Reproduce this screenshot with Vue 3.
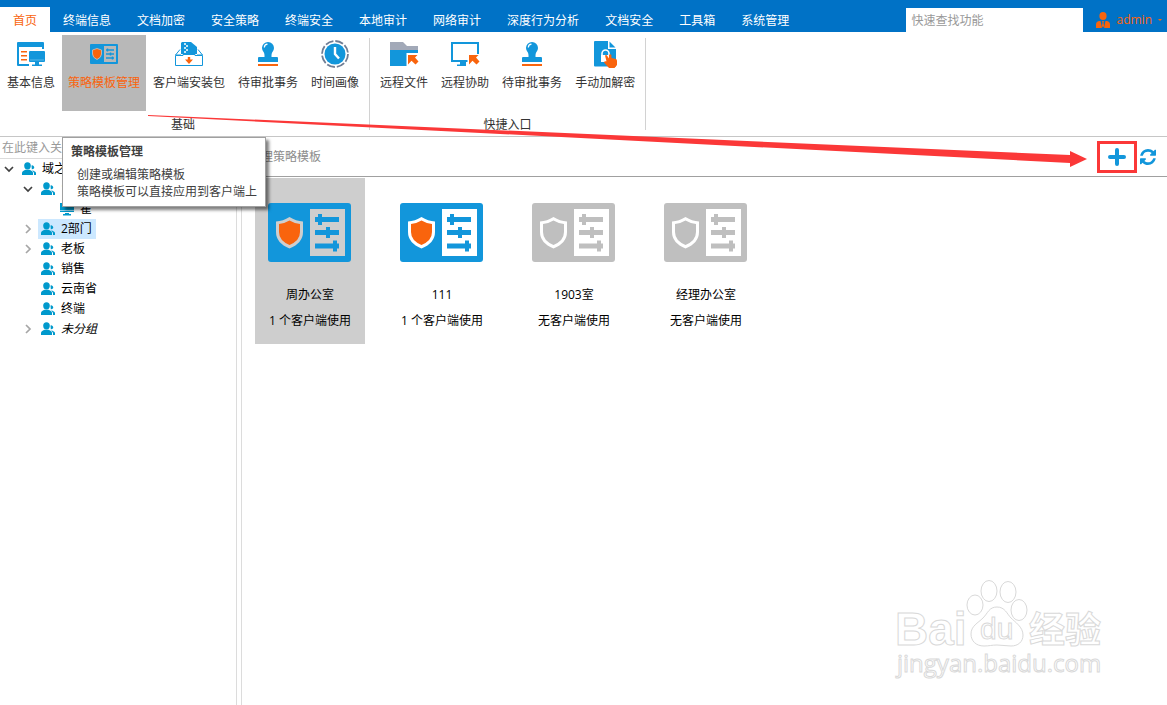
<script setup>
import { ref } from 'vue'

const tabs = ['首页', '终端信息', '文档加密', '安全策略', '终端安全', '本地审计', '网络审计', '深度行为分析', '文档安全', '工具箱', '系统管理']
const activeTab = ref('首页')

const groups = [
  {
    title: '基础',
    items: [
      { icon: 'info', label: '基本信息' },
      { icon: 'template', label: '策略模板管理', active: true },
      { icon: 'package', label: '客户端安装包' },
      { icon: 'stamp', label: '待审批事务' },
      { icon: 'clock', label: '时间画像' },
    ],
  },
  {
    title: '快捷入口',
    items: [
      { icon: 'folder', label: '远程文件' },
      { icon: 'assist', label: '远程协助' },
      { icon: 'stamp', label: '待审批事务' },
      { icon: 'decrypt', label: '手动加解密' },
    ],
  },
]

const nodes = [
  { label: '域之盾', level: 0, state: 'open' },
  { label: '1部门', level: 1, state: 'open' },
  { label: '翟', level: 2, state: 'leaf', computer: true },
  { label: '2部门', level: 1, state: 'closed' },
  { label: '老板', level: 1, state: 'closed' },
  { label: '销售', level: 1, state: 'leaf' },
  { label: '云南省', level: 1, state: 'leaf' },
  { label: '终端', level: 1, state: 'leaf' },
  { label: '未分组', level: 1, state: 'closed', italic: true },
]
const selectedNode = ref('2部门')

const templates = [
  { name: '周办公室', usage: '1 个客户端使用', used: true },
  { name: '111', usage: '1 个客户端使用', used: true },
  { name: '1903室', usage: '无客户端使用', used: false },
  { name: '经理办公室', usage: '无客户端使用', used: false },
]
const selectedTemplate = ref('周办公室')
</script>

<template>
  <div class="app">
    <header class="topbar">
      <nav class="tabs">
        <button
          v-for="tab in tabs"
          :key="tab"
          class="tab"
          :class="{ active: tab === activeTab }"
          @click="activeTab = tab"
        >{{ tab }}</button>
      </nav>
      <input class="quick-search" type="text" placeholder="快速查找功能" aria-label="快速查找功能">
      <button class="user">
        <svg width="14" height="16" viewBox="0 0 14 16" fill="#f9640d">
          <ellipse cx="7" cy="4" rx="3.6" ry="4" />
          <path d="M0 16v-3.500Q0 9.500 3 9h1.500l1.300 5.500V16zM14 16v-3.500Q14 9.500 11 9H9.500l-1.300 5.500V16z" />
          <path d="M6 9h2l-.5 1.500.6 3.500L7 15.500 5.900 14l.6-3.500z" />
        </svg>
        <span>admin</span>
        <i class="caret"></i>
      </button>
    </header>

    <section class="ribbon">
      <div v-for="group in groups" :key="group.title" class="group">
        <div class="group-items">
          <div v-for="item in group.items" :key="item.label" class="tool-wrap">
            <button class="tool" :class="{ active: item.active }">
              <svg class="tool-icon" viewBox="0 0 32 32">
                <g v-if="item.icon === 'info'">
                  <path d="M3 4h25a1 1 0 0 1 1 1v6h-2V9H4v17h10v2H3a1 1 0 0 1-1-1V5a1 1 0 0 1 1-1z" fill="#1296db" />
                  <path d="M6 13h6v1.600H6zM6 17h6v1.600H6zM6 21h6v1.600H6z" fill="#f9640d" />
                  <path d="M15 13h14a1 1 0 0 1 1 1v9a1 1 0 0 1-1 1h-5v2.500h3V28H17v-1.500h3V24h-5a1 1 0 0 1-1-1v-9a1 1 0 0 1 1-1z" fill="#1296db" />
                  <path d="M15 22h14" stroke="#5bb8e8" stroke-width="1" />
                </g>
                <g v-else-if="item.icon === 'template'">
                  <rect x="2" y="6" width="28" height="20" rx="1" fill="#1296db" />
                  <rect x="16" y="8" width="12" height="16" fill="#b8b8b8" />
                  <path d="M9 10.500l4.500 1.500v4q0 3.500-4.500 5.500-4.500-2-4.500-5.500v-4z" fill="#f9640d" stroke="#b8b8b8" />
                  <path d="M18 12h8M18 16h8M18 20h8" stroke="#1296db" stroke-width="1.500" />
                  <path d="M19.500 10.500v3M22.500 14.500v3M24.500 18.500v3" stroke="#1296db" stroke-width="1.500" />
                </g>
                <g v-else-if="item.icon === 'package'">
                  <path d="M8 16V5l1-1h9l6 5v7z" fill="#1296db" />
                  <path d="M11 6h2M13 8h2M11 10h2M13 12h2M11 14h2" stroke="#fff" stroke-width="1.400" />
                  <path d="M7 11.500L2.500 17h5.500M25 11.500l4.500 5.500H24" fill="none" stroke="#1296db" />
                  <path d="M2.500 17.500H10v-1h12v1h7.500v10h-27z" fill="#fff" stroke="#1296db" />
                  <path d="M14.800 19h2.400v2.500h2.800L16 26l-4-4.500h2.800z" fill="#f9640d" />
                </g>
                <g v-else-if="item.icon === 'stamp'">
                  <path d="M16 4a6 6 0 0 1 6 6c0 3-2.500 4-2.500 7v2H25a1 1 0 0 1 1 1v4H6v-4a1 1 0 0 1 1-1h5.500v-2c0-3-2.500-4-2.500-7a6 6 0 0 1 6-6z" fill="#1296db" />
                  <path d="M12.300 9.500a3.500 3.500 0 0 1 3.200-3.300" fill="none" stroke="#fff" stroke-width="1.200" />
                  <rect x="6" y="26" width="20" height="2" fill="#f9640d" />
                </g>
                <g v-else-if="item.icon === 'clock'">
                  <circle cx="16" cy="16" r="13" fill="none" stroke="#6f7d94" stroke-width="1.800" stroke-dasharray="8.200 2" />
                  <circle cx="16" cy="16" r="10.500" fill="#1296db" />
                  <path d="M16 9v7l4 4.500" fill="none" stroke="#fff" stroke-width="2.400" />
                </g>
                <g v-else-if="item.icon === 'folder'">
                  <path d="M2 4h13l4 4h11v5H2z" fill="#a2a9b8" />
                  <rect x="2" y="12" width="28" height="16" fill="#1296db" />
                  <path d="M18.500 15H32v14H18.500z" fill="#fff" />
                  <path d="M20 17h9.500l-2.500 2.500 3.500 4-3 3-4-3.800-3.500 3.800z" fill="#f9640d" />
                </g>
                <g v-else-if="item.icon === 'assist'">
                  <rect x="3" y="5" width="26" height="18" fill="none" stroke="#1296db" stroke-width="2" />
                  <path d="M11 24h6v4H8v-1.500h3z" fill="#1296db" />
                  <path d="M18.500 16H32v13H18.500z" fill="#fff" />
                  <path d="M20 17h9.500l-2.500 2.500 3.500 4-3 3-4-3.800-3.500 3.800z" fill="#f9640d" />
                </g>
                <g v-else>
                  <path d="M6 3h13v8h8v17.500H6a1 1 0 0 1-1-1V4a1 1 0 0 1 1-1zM20.500 3.500l6 6h-6z" fill="#1296db" />
                  <path d="M13 18v-2.500a3.500 3.500 0 0 1 7 0V18" fill="none" stroke="#fff" stroke-width="1.600" />
                  <rect x="12" y="17" width="8" height="7" fill="#fff" />
                  <path d="M16 17.500q1.500-1 2.300.5l1.700 2.500V17q1.200-1.500 2.400 0v3l4.600 1q1 .5 1 2v4l-2.500 3H20l-5-5.500q0-1.500 2.500-1.200z" fill="#f9640d" />
                </g>
              </svg>
              <span>{{ item.label }}</span>
            </button>
            <div v-if="item.active" class="tooltip" role="tooltip">
              <strong>策略模板管理</strong>
              <p>创建或编辑策略模板</p>
              <p>策略模板可以直接应用到客户端上</p>
            </div>
          </div>
        </div>
        <div class="group-title">{{ group.title }}</div>
      </div>
    </section>

    <div class="body">
      <aside class="sidebar">
        <input class="tree-search" type="text" placeholder="在此键入关键字" aria-label="在此键入关键字">
        <ul class="tree">
          <li v-for="node in nodes" :key="node.label" class="node" :class="`level-${node.level}`">
            <span class="toggle">
              <svg v-if="node.state === 'open'" width="10" height="10" viewBox="0 0 10 10">
                <path d="M1 3l4 4 4-4" fill="none" stroke="#404040" stroke-width="1.700" />
              </svg>
              <svg v-else-if="node.state === 'closed'" width="10" height="10" viewBox="0 0 10 10">
                <path d="M3 1l4 4-4 4" fill="none" stroke="#a6a6a6" stroke-width="1.700" />
              </svg>
            </span>
            <button
              class="node-label"
              :class="{ selected: node.label === selectedNode, italic: node.italic }"
              @click="selectedNode = node.label"
            >
              <svg v-if="node.computer" width="14" height="14" viewBox="0 0 14 14" fill="#0099cc">
                <path d="M0 1h14v9H0zM5 11h4v1h2v1.500H3V12h2z" />
                <path d="M0 8.500h14" stroke="#8fd0ea" />
              </svg>
              <svg v-else width="14" height="14" viewBox="0 0 14 14" fill="#0099cc">
                <ellipse cx="5.500" cy="3.800" rx="3.300" ry="3.600" />
                <path d="M0 13v-2q0-2 3.500-3.300h4q3.500 1.300 3.500 3.300v2z" />
                <path d="M9.500 3.500a2 2 0 1 1 .3 3.800zM10 8.500q3.500.5 4 2.500v2h-2v-2q-.5-1.500-2-2.500z" />
              </svg>
              <span>{{ node.label }}</span>
            </button>
          </li>
        </ul>
      </aside>

      <main class="content">
        <div class="toolbar">
          <h1>管理策略模板</h1>
          <button class="tool-btn add" aria-label="新建">
            <svg width="18" height="18" viewBox="0 0 18 18">
              <path d="M9 2v14M2 9h14" stroke="#1296db" stroke-width="4" stroke-linecap="round" />
            </svg>
            <i class="highlight"></i>
          </button>
          <button class="tool-btn" aria-label="刷新">
            <svg width="16" height="16" viewBox="0 128 1536 1536" fill="#1296db">
              <path d="M1511 1056q0 5-1 7-64 268-268 434.500t-478 166.500q-146 0-282.500-55t-243.500-157l-129 129q-19 19-45 19t-45-19-19-45v-448q0-26 19-45t45-19h448q26 0 45 19t19 45-19 45l-137 137q71 66 161 102t187 36q134 0 250-65t186-179q11-17 53-117 8-23 30-23h192q13 0 22.500 9.500t9.500 22.500zm25-800v448q0 26-19 45t-45 19h-448q-26 0-45-19t-19-45 19-45l138-138q-148-137-349-137-134 0-250 65t-186 179q-11 17-53 117-8 23-30 23h-199q-13 0-22.500-9.500t-9.500-22.500v-7q65-268 270-434.500t480-166.500q146 0 284 55.500t245 156.500l130-129q19-19 45-19t45 19 19 45z" />
            </svg>
          </button>
        </div>

        <div class="cards">
          <button
            v-for="card in templates"
            :key="card.name"
            class="card"
            :class="{ selected: card.name === selectedTemplate, unused: !card.used }"
            @click="selectedTemplate = card.name"
          >
            <svg class="card-icon" viewBox="0 0 84 59">
              <rect class="base" width="83" height="59" rx="3" />
              <rect class="hole" x="42" y="6" width="35" height="47" />
              <path class="hole" d="M21.500 14q6.500 4 13.500 4.500V29q0 11-13.500 16.500Q8 40 8 29V18.500Q15 18 21.500 14z" />
              <path class="shield" d="M21.500 17.500q5 3 10.500 3.500v8q0 8.500-10.500 13Q11 37.500 11 29v-8q5.500-.5 10.500-3.500z" />
              <path class="base" d="M47 14h24v5H47zM50 11h4v11h-4zM47 27h24v5H47zM58 24h4v11h-4zM47 40.500h24v5H47zM65 37.500h4v11h-4z" />
            </svg>
            <span>{{ card.name }}</span>
            <span>{{ card.usage }}</span>
          </button>
        </div>
      </main>
    </div>

    <svg class="arrow" viewBox="0 0 939 54" preserveAspectRatio="none" aria-hidden="true">
      <path d="M0 0l922 40v-4l17 8-17 8v-4L0 1z" fill="#fb3838" />
    </svg>

    <svg class="watermark" width="240" height="120" viewBox="0 0 240 120">
      <text class="mark-bold" x="15" y="75" font-size="46">Bai</text>
      <ellipse cx="95" cy="35" rx="8" ry="10" />
      <ellipse cx="109" cy="21" rx="8" ry="10.500" />
      <ellipse cx="128" cy="22" rx="8" ry="10.500" />
      <ellipse cx="139" cy="40" rx="8" ry="10.500" />
      <path d="M117 37c8 0 10 7 14 11s12 9 12 17c0 7-5 11-12 11-5 0-9-1-14-1s-8 1-13 1c-8 0-13-5-13-12 0-8 7-11 12-16s6-11 14-11z" />
      <text class="mark-thin" x="100" y="69" font-size="30">du</text>
      <text class="mark-cjk" x="149" y="73" font-size="36">经验</text>
      <text class="mark-url" x="17" y="102" font-size="24">jingyan.baidu.com</text>
    </svg>
  </div>
</template>

<style>
body {
  margin: 0;
}
</style>

<style scoped>
.app {
  position: relative;
  display: flex;
  flex-direction: column;
  min-height: 100vh;
  overflow: hidden;
  background: #fff;
  color: #000;
  font-family: "Open Sans", "Noto Sans CJK SC", sans-serif;
  font-size: 12px;
  line-height: 20px;
}

button,
input {
  margin: 0;
  padding: 0;
  border: 0;
  background: none;
  color: inherit;
  font: inherit;
  white-space: nowrap;
}

input {
  box-sizing: border-box;
  outline: none;
}

input::placeholder {
  color: #999;
  opacity: 1;
}

svg {
  display: block;
  flex: none;
}

/* top bar */
.topbar {
  display: flex;
  align-items: flex-end;
  height: 32px;
  background: #0072c6;
}

.tabs {
  display: flex;
  margin-right: auto;
}

.tab {
  height: 25px;
  padding: 2px 13px 0;
  color: #fff;
}

.tab.active {
  background: #fff;
  color: #f9640d;
}

.quick-search {
  width: 177px;
  height: 24px;
  padding: 0 5px;
  background: #fff;
}

.user {
  display: flex;
  align-items: center;
  gap: 6px;
  height: 24px;
  padding: 0 5px 0 13px;
  color: #f9640d;
}

.caret {
  border: 2px solid transparent;
  border-top-color: #f9640d;
  border-bottom: 0;
}

/* ribbon */
.ribbon {
  display: flex;
  height: 104px;
  border-bottom: 1px solid #c6c6c6;
}

.group {
  position: relative;
  display: flex;
  flex-direction: column;
  justify-content: space-between;
  margin: 3px 0 1px;
  padding: 0 4px;
  color: #333;
}

.group:first-child {
  padding-left: 1px;
}

.group::after {
  content: "";
  position: absolute;
  top: 3px;
  right: -1px;
  bottom: 5px;
  border-right: 1px solid #d2d2d2;
}

.group + .group {
  margin-left: 1px;
}

.group-items {
  display: flex;
  gap: 1px;
}

.group-title {
  text-align: center;
}

.tool-wrap {
  position: relative;
}

.tool {
  display: flex;
  flex-direction: column;
  align-items: center;
  gap: 3px;
  height: 76px;
  padding: 3px 6px;
}

.tool.active {
  background: #b8b8b8;
  color: #f9640d;
}

.tool-icon {
  width: 32px;
  height: 32px;
}

.tooltip {
  position: absolute;
  z-index: 5;
  top: 102px;
  left: 0;
  padding: 5px 8px 6px;
  border: 1px solid #a0a0a0;
  background: #fff;
  box-shadow: 3px 3px 3px rgba(0, 0, 0, 0.5);
  color: #404040;
  line-height: 17px;
  white-space: nowrap;
}

.tooltip strong {
  display: block;
  margin-bottom: 6px;
}

.tooltip p {
  margin: 0 0 0 6px;
}

/* body */
.body {
  display: flex;
  flex: 1;
  gap: 4px;
}

.sidebar {
  flex: none;
  width: 236px;
  border-right: 1px solid #dcdcdc;
}

.tree-search {
  display: block;
  width: 100%;
  height: 22px;
  padding: 0 2px;
  border-bottom: 1px solid #dcdcdc;
}

.tree {
  margin: 0;
  padding: 0;
  list-style: none;
}

.node {
  display: flex;
  align-items: center;
  height: 20px;
  padding-left: 4px;
}

.level-1 {
  padding-left: 23px;
}

.level-2 {
  padding-left: 42px;
}

.toggle {
  width: 15px;
}

.node-label {
  display: flex;
  align-items: center;
  gap: 6px;
  padding: 0 4px 0 3px;
}

.node-label.selected {
  background: #cce8ff;
}

.node-label.italic {
  font-style: italic;
}

.content {
  flex: 1;
  border-left: 1px solid #dcdcdc;
}

.toolbar {
  display: flex;
  align-items: center;
  gap: 14px;
  height: 39px;
  padding: 0 11px 0 7px;
  border-bottom: 1px solid #a0a0a0;
}

.toolbar h1 {
  margin: 0 auto 0 0;
  color: #8c8c8c;
  font-size: 12px;
  font-weight: 400;
}

.tool-btn {
  position: relative;
}

.highlight {
  position: absolute;
  inset: -7px -11px;
  border: 3px solid #fb3838;
}

.cards {
  display: flex;
  flex-wrap: wrap;
  gap: 22px;
  padding: 1px 13px;
}

.card {
  --base: #1296db;
  --hole: #fff;
  --shield: #f9640d;
  display: flex;
  flex-direction: column;
  align-items: center;
  gap: 6px;
  width: 110px;
  height: 166px;
  padding-top: 25px;
}

.card.unused {
  --base: #bfbfbf;
  --shield: #bfbfbf;
}

.card.selected {
  --hole: #cecece;
  background: #cecece;
}

.card-icon {
  width: 84px;
  height: 59px;
  margin-bottom: 17px;
}

.base {
  fill: var(--base);
}

.hole {
  fill: var(--hole);
}

.shield {
  fill: var(--shield);
}

/* arrow from the ribbon button to the add button */
.arrow {
  position: absolute;
  top: 115px;
  left: 148px;
  width: calc(100% - 228px);
  height: 54px;
  pointer-events: none;
}

.watermark {
  position: absolute;
  right: 47px;
  bottom: 15px;
  fill: #fff;
  stroke: #d9d9d9;
  stroke-width: 1;
  pointer-events: none;
}

.mark-bold {
  font-family: "Liberation Sans", sans-serif;
  font-weight: 700;
}

.mark-thin {
  font-family: "Liberation Sans", sans-serif;
}

.mark-cjk {
  font-family: "Noto Sans CJK SC", sans-serif;
  font-weight: 700;
}

.mark-url {
  font-family: "Open Sans", sans-serif;
}
</style>
